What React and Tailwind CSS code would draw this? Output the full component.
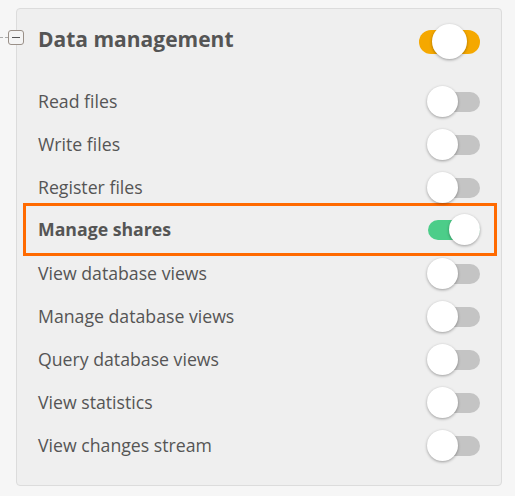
import React from "react";

const permissions = [
  { label: "Read files", on: false },
  { label: "Write files", on: false },
  { label: "Register files", on: false },
  { label: "Manage shares", on: true, highlight: true },
  { label: "View database views", on: false },
  { label: "Manage database views", on: false },
  { label: "Query database views", on: false },
  { label: "View statistics", on: false },
  { label: "View changes stream", on: false },
];

function Toggle({ on }) {
  return (
    <div className="relative w-[52px] h-[31px] flex items-center">
      <div
        className={
          "w-full h-[20px] rounded-full " + (on ? "bg-[#4ccd89]" : "bg-[#c4c4c4]")
        }
      />
      <div
        className={
          "absolute top-0 w-[31px] h-[31px] rounded-full bg-white shadow-[0_1px_3px_rgba(0,0,0,0.35)] " +
          (on ? "right-0" : "-left-[1px]")
        }
      />
    </div>
  );
}

function PartialToggle() {
  return (
    <div className="relative w-[61px] h-[35px] flex items-center">
      <div className="w-full h-[24px] rounded-full bg-[#f5a800]" />
      <div className="absolute top-0 left-[13px] w-[35px] h-[35px] rounded-full bg-white shadow-[0_1px_3px_rgba(0,0,0,0.35)]" />
    </div>
  );
}

export default function App() {
  return (
    <div className="min-h-[496px] bg-[#f6f6f6] pt-[8px] pl-[16px] font-['Open_Sans',sans-serif] text-[#555]">
      <div className="relative w-[486px] h-[478px] rounded-[4px] border border-[#dcdcdc] bg-[#efefef]">
        <div className="absolute -left-[17px] top-[28px] w-[8px] border-t border-dashed border-[#aaa]" />
        <div className="absolute -left-[9px] top-[21px] w-[16px] h-[15px] rounded-[3px] border border-[#9a9088] bg-[#f4f4f4] flex items-center justify-center">
          <div className="w-[8px] h-[1.5px] bg-[#555]" />
        </div>

        <div className="h-[62px] pl-[21px] pr-[21px] flex items-center justify-between">
          <span className="text-[21px] font-bold">Data management</span>
          <div className="mt-[3px]">
            <PartialToggle />
          </div>
        </div>

        <div className="pt-[9px] pl-[21px] pr-[21px]">
          {permissions.map((p) =>
            p.highlight ? (
              <div
                key={p.label}
                className="h-[53px] -mt-[6px] -mb-[4px] -ml-[15px] -mr-[17px] pl-[12px] pr-[14px] border-[3px] border-[#ff6a00] flex items-center justify-between"
              >
                <span className="text-[17.7px] font-bold">{p.label}</span>
                <Toggle on={p.on} />
              </div>
            ) : (
              <div key={p.label} className="h-[43px] flex items-center justify-between">
                <span className="text-[17.7px]">{p.label}</span>
                <Toggle on={p.on} />
              </div>
            )
          )}
        </div>
      </div>
    </div>
  );
}
